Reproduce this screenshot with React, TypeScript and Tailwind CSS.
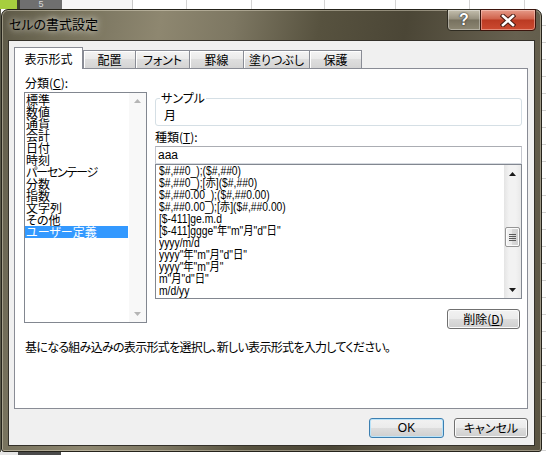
import React from "react";

const jp = "font-['Noto_Sans_CJK_JP',sans-serif] [font-feature-settings:'palt']";
const narrow = "font-['Liberation_Sans','Noto_Sans_CJK_JP',sans-serif]";

const categories = [
  "標準",
  "数値",
  "通貨",
  "会計",
  "日付",
  "時刻",
  "パーセンテージ",
  "分数",
  "指数",
  "文字列",
  "その他",
  "ユーザー定義",
];

const formats = [
  "$#,##0_);($#,##0)",
  "$#,##0_);[赤]($#,##0)",
  "$#,##0.00_);($#,##0.00)",
  "$#,##0.00_);[赤]($#,##0.00)",
  "[$-411]ge.m.d",
  '[$-411]ggge"年"m"月"d"日"',
  "yyyy/m/d",
  'yyyy"年"m"月"d"日"',
  'yyyy"年"m"月"',
  'm"月"d"日"',
  "m/d/yy",
];

function Arrow({ dir, color }: { dir: "up" | "down"; color: string }) {
  return (
    <svg width="7" height="4" viewBox="0 0 7 4">
      {dir === "up" ? (
        <path d="M0 4 L3.5 0 L7 4 Z" fill={color} />
      ) : (
        <path d="M0 0 L3.5 4 L7 0 Z" fill={color} />
      )}
    </svg>
  );
}

function Tab({ label, w, first }: { label: string; w: string; first?: boolean }) {
  return (
    <div
      className={`${w} ${first ? "" : "-ml-px"} mt-[3px] h-[18px] flex items-center justify-center border border-b-0 border-[#898c95] bg-[linear-gradient(#f4f4f4,#e9e9e9_50%,#dedede_50%,#d4d4d4)] text-[12px] leading-[12px] text-black shadow-[inset_1px_1px_0_#ffffff]`}
    >
      {label}
    </div>
  );
}

function Btn({ children, w, def }: { children: React.ReactNode; w: string; def?: boolean }) {
  return (
    <div
      className={`${w} h-[20px] rounded-[3px] border ${
        def
          ? "border-[#3c7fb1] shadow-[inset_0_0_0_1px_#b9e3f9]"
          : "border-[#707070] shadow-[inset_0_0_0_1px_#fbfbfb]"
      } bg-[linear-gradient(#f2f2f2,#ebebeb_50%,#dddddd_50%,#cfcfcf)] flex items-center justify-center text-[12px] leading-[12px] text-black`}
    >
      {children}
    </div>
  );
}

export default function App() {
  return (
    <div className={`w-[546px] h-[455px] overflow-hidden bg-white flex flex-col ${jp}`}>
      {/* excel background top strip */}
      <div className="h-[9px] flex shrink-0">
        <div className="w-[17px] bg-[#a6cf3e]" />
        <div className="w-[3px] bg-[#3e4030]" />
        <div className="w-[42px] bg-[#6f6f6f] flex justify-center text-[9px] leading-[9px] text-[#d8d8d8] font-['Liberation_Sans',sans-serif]">
          5
        </div>
        <div className="w-[71px] border-r border-[#c9c9c9] bg-[#f6f6f6]" />
        <div className="w-[54px] border-r border-[#d4d4d4]" />
        <div className="w-[65px] border-r border-[#d4d4d4]" />
        <div className="w-[73px] border-r border-[#d4d4d4]" />
        <div className="w-[71px] border-r border-[#d4d4d4]" />
        <div className="w-[74px] border-r border-[#d4d4d4]" />
        <div className="w-[55px] border-r border-[#d4d4d4]" />
        <div className="flex-1" />
      </div>

      <div className="h-[443px] flex shrink-0">
        <div className="w-[1px] bg-[#5b5a4a]" />
        {/* dialog window */}
        <div className="w-[541px] h-[443px] flex flex-col rounded-t-[7px] rounded-b-[3px] border border-[#25231b] bg-[linear-gradient(100deg,#5d5947_0%,#77725d_12%,#8e8770_26%,#7d7762_38%,#57523f_52%,#4b4636_66%,#676150_84%,#5a5442_100%)] shadow-[inset_0_0_0_1px_rgba(230,225,205,0.45)]">
          {/* title bar */}
          <div className="h-[30px] flex items-start justify-between shrink-0">
            <div className="pl-[7px] pt-[5px] text-[13px] leading-[18px] text-black [text-shadow:0_0_6px_rgba(255,255,250,0.75),0_0_10px_rgba(255,255,250,0.5)]">
              セルの書式設定
            </div>
            <div className="flex -mt-px mr-[5px]">
              <div className="w-[34px] h-[22px] rounded-bl-[4px] border border-[#2f2c22] bg-[linear-gradient(#c4bfae,#97917f_45%,#77715f_50%,#8d8773)] shadow-[inset_0_0_0_1px_rgba(255,255,255,0.35)] flex items-center justify-center text-[16px] leading-[16px] font-bold text-white font-['Liberation_Sans',sans-serif] [text-shadow:0_0_1px_#222,0_0_2px_#333]">
                ?
              </div>
              <div className="-ml-px w-[56px] h-[22px] rounded-br-[4px] border border-[#3b140c] bg-[linear-gradient(#e69a88,#d0624b_45%,#bb3a22_50%,#cc4a30)] shadow-[inset_0_0_0_1px_rgba(255,220,210,0.45)] flex items-center justify-center">
                <svg width="16" height="13" viewBox="0 0 16 13">
                  <path d="M3 2 L13 11 M13 2 L3 11" stroke="#4a1d14" strokeWidth="4.6" strokeLinecap="square" />
                  <path d="M3 2 L13 11 M13 2 L3 11" stroke="#ffffff" strokeWidth="2.6" strokeLinecap="square" />
                </svg>
              </div>
            </div>
          </div>

          {/* client area */}
          <div className="mx-[6px] mb-[5px] flex-1 border border-[#34312a] bg-[#f0f0f0] flex flex-col pl-[5px] pt-[6px]">
            {/* tabs */}
            <div className="h-[21px] flex items-start shrink-0">
              <div className="relative z-10 w-[69px] h-[22px] border border-b-0 border-[#898c95] bg-white flex items-center justify-center text-[12px] leading-[12px] text-black">
                表示形式
              </div>
              <Tab label="配置" w="w-[53px]" first />
              <Tab label="フォント" w="w-[55px]" />
              <Tab label="罫線" w="w-[55px]" />
              <Tab label="塗りつぶし" w="w-[67px]" />
              <Tab label="保護" w="w-[53px]" />
            </div>

            {/* panel */}
            <div className="w-[514px] h-[341px] shrink-0 border border-[#898c95] bg-white pt-[8px] pl-[9px] text-[12px] leading-[12px] text-black">
              <div className="flex items-start gap-[8px]">
                {/* left column */}
                <div className="w-[123px] flex flex-col">
                  <div className="h-[15px] pl-[1px]">
                    分類(<span className="underline">C</span>):
                  </div>
                  <div className="h-[231px] border border-[#828790] flex">
                    <div className="flex-1 pt-[1px] flex flex-col">
                      {categories.map((c) => (
                        <div
                          key={c}
                          className={`h-[12px] pl-[1px] whitespace-nowrap ${
                            c === "ユーザー定義" ? "bg-[#3399ff] text-white mr-[1px]" : ""
                          } ${c === "パーセンテージ" ? "tracking-[-1.2px]" : ""}`}
                        >
                          {c}
                        </div>
                      ))}
                    </div>
                    <div className="w-[17px] bg-[#f8f8f8] flex flex-col justify-between items-center pt-[6px] pb-[6px]">
                      <Arrow dir="up" color="#b5b5b5" />
                      <Arrow dir="down" color="#b5b5b5" />
                    </div>
                  </div>
                </div>

                {/* right column */}
                <div className="w-[367px] flex flex-col">
                  <div className="relative mt-[21px] h-[28px] rounded-[3px] border border-[#d5dfe5] pl-[8px] pt-[10px]">
                    <div className="absolute left-[4px] top-[-7px] bg-white px-[1px]">サンプル</div>
                    月
                  </div>
                  <div className="mt-[5px] h-[12px]">
                    種類(<span className="underline">T</span>):
                  </div>
                  <div className="mt-[3px] h-[18px] border border-[#abadb3] border-l-[#c6c8cf] border-r-[#c6c8cf] border-b-[#d6dae0] pl-[2px] flex items-center font-['Liberation_Sans',sans-serif] text-[12px]">
                    aaa
                  </div>
                  <div className="h-[135px] border border-[#828790] flex">
                    <div className={`flex-1 pl-[3px] flex flex-col ${narrow}`}>
                      {formats.map((f) => (
                        <div
                          key={f}
                          className="h-[12px] leading-[12px] whitespace-nowrap text-[12px] origin-left scale-x-[0.86]"
                        >
                          {f}
                        </div>
                      ))}
                    </div>
                    <div className="w-[17px] bg-[linear-gradient(90deg,#e4e4e4,#f2f2f2_30%,#f2f2f2_70%,#e8e8e8)] flex flex-col">
                      <div className="h-[17px] flex items-center justify-center">
                        <Arrow dir="up" color="#1a1a1a" />
                      </div>
                      <div className="flex-1 flex flex-col">
                        <div className="mt-[45px] h-[20px] mx-[1px] rounded-[2px] border border-[#959595] bg-[linear-gradient(90deg,#f4f4f4,#e8e8e8_50%,#d8d8d8_50%,#cfcfcf)] shadow-[inset_0_0_0_1px_#fcfcfc] flex flex-col items-center justify-center gap-[1px]">
                          <div className="w-[7px] h-px bg-[#5a5a5a]" />
                          <div className="w-[7px] h-px bg-[#5a5a5a]" />
                          <div className="w-[7px] h-px bg-[#5a5a5a]" />
                          <div className="w-[7px] h-px bg-[#5a5a5a]" />
                        </div>
                      </div>
                      <div className="h-[17px] flex items-center justify-center">
                        <Arrow dir="down" color="#1a1a1a" />
                      </div>
                    </div>
                  </div>
                  <div className="mt-[10px] self-end mr-[2px]">
                    <Btn w="w-[73px]">
                      削除(<span className="underline">D</span>)
                    </Btn>
                  </div>
                </div>
              </div>
              <div className="mt-[12px] ml-[1px] whitespace-nowrap tracking-[-0.7px]">
                基になる組み込みの表示形式を選択し、新しい表示形式を入力してください。
              </div>
            </div>

            {/* bottom buttons */}
            <div className="w-[514px] mt-[9px] flex justify-end gap-[10px]">
              <Btn w="w-[75px]" def>
                <span className="font-['Liberation_Sans',sans-serif]">OK</span>
              </Btn>
              <Btn w="w-[74px]">キャンセル</Btn>
            </div>
          </div>
        </div>
        <div className="flex-1 bg-white bg-[repeating-linear-gradient(to_bottom,transparent_0,transparent_16px,#d6d6d6_16px,#d6d6d6_17px)]" />
      </div>

      <div className="h-[3px] flex shrink-0">
        <div className="w-[18px] bg-[#e6e6e6]" />
        <div className="w-[43px] bg-[#4a4a4a]" />
        <div className="flex-1 bg-white" />
      </div>
    </div>
  );
}
